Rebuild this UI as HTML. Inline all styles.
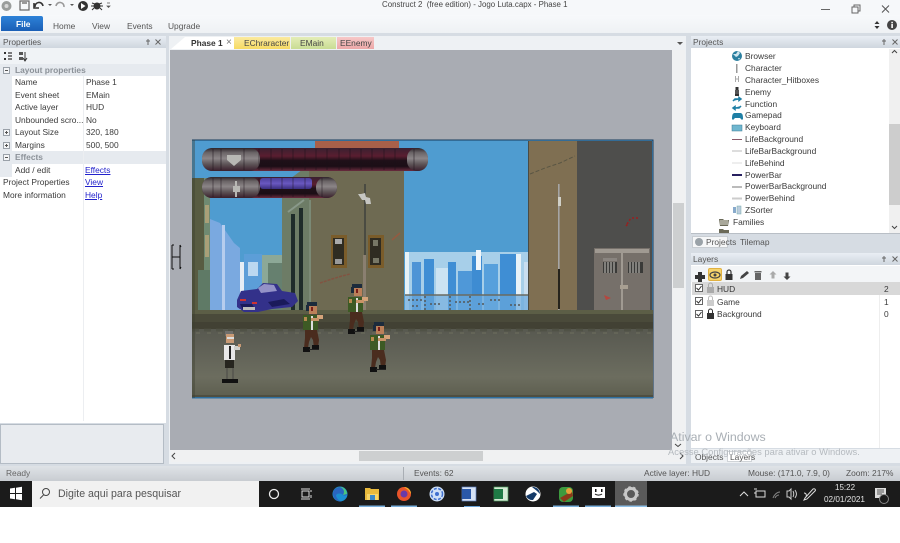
<!DOCTYPE html>
<html><head><meta charset="utf-8"><title>Construct 2</title>
<style>
html,body{margin:0;padding:0;background:#fff;width:900px;height:543px;overflow:hidden}
#a{position:relative;width:900px;height:543px;overflow:hidden;font-family:"Liberation Sans",sans-serif;font-size:8.4px;color:#3a3a3a;filter:blur(.3px)}
.b{position:absolute}
.t{position:absolute;white-space:nowrap;line-height:12px}
.l{color:#2222cc;text-decoration:underline}
.g{color:#8b9198;font-weight:bold}
.h{position:absolute;height:12px;background:linear-gradient(#e9eef4,#cfd6de)}
.w{color:#e4e4e4}
svg{position:absolute;left:0;top:0}
</style></head><body><div id="a">
<div class="b" style="left:0;top:0;width:900px;height:15px;background:#f6f8fa"></div>
<div class="b" style="left:0;top:15px;width:900px;height:18px;background:linear-gradient(#f7f9fb,#eef1f4)"></div>
<div class="b" style="left:0;top:33px;width:900px;height:433px;background:#d6dce3"></div>
<div class="b" style="left:1px;top:16px;width:42px;height:15px;background:linear-gradient(#2d82d8,#1a5fb6);border-radius:2px 2px 0 0"></div>
<div class="t" style="left:16px;top:18px;color:#fff;font-weight:bold">File</div>
<div class="t" style="left:382px;top:-1px;color:#444;font-size:7.9px">Construct 2&nbsp; (free edition) - Jogo Luta.capx - Phase 1</div>
<div class="t" style="left:53px;top:20px;color:#555">Home</div>
<div class="t" style="left:92px;top:20px;color:#555">View</div>
<div class="t" style="left:127px;top:20px;color:#555">Events</div>
<div class="t" style="left:168px;top:20px;color:#555">Upgrade</div>

<!-- properties -->
<div class="b" style="left:0;top:48px;width:166px;height:375px;background:#fff"></div>
<div class="b" style="left:0;top:48px;width:166px;height:16px;background:#f0f3f6"></div>
<div class="h" style="left:0;top:36px;width:166px"></div>
<div class="t" style="left:3px;top:36px;color:#555">Properties</div>
<div class="b" style="left:0;top:64px;width:166px;height:12px;background:#e6eaef"></div>
<div class="b" style="left:0;top:76px;width:12px;height:101px;background:#e6eaef"></div>
<div class="b" style="left:0;top:151px;width:166px;height:13px;background:#e6eaef"></div>
<div class="b" style="left:83px;top:76px;width:1px;height:345px;background:#eceef1"></div>
<div class="t g" style="left:15px;top:64px">Layout properties</div>
<div class="t" style="left:15px;top:76px">Name</div><div class="t" style="left:86px;top:76px">Phase 1</div>
<div class="t" style="left:15px;top:89px">Event sheet</div><div class="t" style="left:86px;top:89px">EMain</div>
<div class="t" style="left:15px;top:101px">Active layer</div><div class="t" style="left:86px;top:101px">HUD</div>
<div class="t" style="left:15px;top:114px">Unbounded scro...</div><div class="t" style="left:86px;top:114px">No</div>
<div class="t" style="left:15px;top:126px">Layout Size</div><div class="t" style="left:86px;top:126px">320, 180</div>
<div class="t" style="left:15px;top:139px">Margins</div><div class="t" style="left:86px;top:139px">500, 500</div>
<div class="t g" style="left:15px;top:151px">Effects</div>
<div class="t" style="left:15px;top:164px">Add / edit</div><div class="t l" style="left:85px;top:164px">Effects</div>
<div class="t" style="left:3px;top:176px">Project Properties</div><div class="t l" style="left:85px;top:176px">View</div>
<div class="t" style="left:3px;top:189px">More information</div><div class="t l" style="left:85px;top:189px">Help</div>
<div class="b" style="left:0;top:424px;width:164px;height:40px;background:#e8ebef;border:1px solid #b4bcc5;box-sizing:border-box"></div>

<!-- editor -->
<div class="b" style="left:169px;top:36px;width:517px;height:428px;background:#eef1f4"></div>
<div class="b" style="left:170px;top:50px;width:502px;height:400px;background:#a9acb3"></div>
<div class="b" style="left:672px;top:50px;width:13px;height:400px;background:#f0f1f2"></div>
<div class="b" style="left:673px;top:203px;width:11px;height:85px;background:#cdcfd0"></div>
<div class="b" style="left:171px;top:450px;width:514px;height:12px;background:#f0f1f2"></div>
<div class="b" style="left:359px;top:451px;width:124px;height:10px;background:#cdcfd0"></div>
<div class="b" style="left:234px;top:37px;width:56px;height:12px;background:linear-gradient(#fbeaa0,#f6da62)"></div>
<div class="b" style="left:291px;top:37px;width:45px;height:12px;background:linear-gradient(#e4edb8,#c9dc94)"></div>
<div class="b" style="left:337px;top:37px;width:37px;height:12px;background:linear-gradient(#f6c8c8,#eca8a8)"></div>
<div class="t" style="left:191px;top:36.5px;font-weight:bold;color:#333">Phase 1</div>
<div class="t" style="left:226px;top:36.5px;color:#777;font-size:10px">×</div>
<div class="t" style="left:244px;top:36.5px;color:#444">EChraracter</div>
<div class="t" style="left:300px;top:36.5px;color:#444">EMain</div>
<div class="t" style="left:340px;top:36.5px;color:#444">EEnemy</div>

<!-- projects -->
<div class="b" style="left:691px;top:36px;width:209px;height:197px;background:#fff"></div>
<div class="h" style="left:691px;top:36px;width:209px"></div>
<div class="t" style="left:693px;top:36px;color:#555">Projects</div>
<div class="b" style="left:889px;top:49px;width:11px;height:184px;background:#f0f0f0"></div>
<div class="b" style="left:889px;top:124px;width:11px;height:81px;background:#cdcdcd"></div>
<div class="t" style="left:745px;top:50px">Browser</div>
<div class="t" style="left:745px;top:62px">Character</div>
<div class="t" style="left:745px;top:74px">Character_Hitboxes</div>
<div class="t" style="left:745px;top:86px">Enemy</div>
<div class="t" style="left:745px;top:98px">Function</div>
<div class="t" style="left:745px;top:109px">Gamepad</div>
<div class="t" style="left:745px;top:121px">Keyboard</div>
<div class="t" style="left:745px;top:133px">LifeBackground</div>
<div class="t" style="left:745px;top:145px">LifeBarBackground</div>
<div class="t" style="left:745px;top:157px">LifeBehind</div>
<div class="t" style="left:745px;top:169px">PowerBar</div>
<div class="t" style="left:745px;top:180px">PowerBarBackground</div>
<div class="t" style="left:745px;top:192px">PowerBehind</div>
<div class="t" style="left:745px;top:204px">ZSorter</div>
<div class="t" style="left:733px;top:216px">Families</div>
<div class="b" style="left:691px;top:233px;width:209px;height:1px;background:#b9bfc6"></div>
<div class="b" style="left:692px;top:236px;width:36px;height:12px;background:#f6f7f8;border:1px solid #c8cdd2;box-sizing:border-box"></div>
<div class="t" style="left:706px;top:236px;color:#555">Projects</div>
<div class="t" style="left:740px;top:236px;color:#555">Tilemap</div>

<!-- layers -->
<div class="b" style="left:691px;top:264px;width:209px;height:184px;background:#fff"></div>
<div class="h" style="left:691px;top:253px;width:209px"></div>
<div class="t" style="left:693px;top:253px;color:#555">Layers</div>
<div class="b" style="left:691px;top:266px;width:209px;height:16px;background:#f3f5f7"></div>
<div class="b" style="left:708px;top:268px;width:14px;height:13px;background:#f5d36b;border:1px solid #e0b040;box-sizing:border-box;border-radius:2px"></div>
<div class="b" style="left:692px;top:282px;width:208px;height:13px;background:#d8d8d8"></div>
<div class="b" style="left:879px;top:295px;width:1px;height:153px;background:#eee"></div>
<div class="t" style="left:717px;top:283px;color:#333">HUD</div>
<div class="t" style="left:717px;top:295.5px">Game</div>
<div class="t" style="left:717px;top:308px">Background</div>
<div class="t" style="left:884px;top:283px">2</div>
<div class="t" style="left:884px;top:295.5px">1</div>
<div class="t" style="left:884px;top:308px">0</div>
<div class="b" style="left:691px;top:449px;width:209px;height:14px;background:#eef1f4"></div>
<div class="b" style="left:727px;top:451px;width:25px;height:11px;background:#fff;border:1px solid #d0d4d8;box-sizing:border-box"></div>
<div class="t" style="left:695px;top:451px;color:#555">Objects</div>
<div class="t" style="left:730px;top:451px;color:#555">Layers</div>

<!-- status -->
<div class="b" style="left:0;top:466px;width:900px;height:15px;background:linear-gradient(#dfe3e7,#c8ccd1)"></div>
<div class="b" style="left:403px;top:467px;width:1px;height:13px;background:#a9aeb4"></div>
<div class="t" style="left:6px;top:467px;color:#666">Ready</div>
<div class="t" style="left:414px;top:467px;color:#555">Events: 62</div>
<div class="t" style="left:644px;top:467px;color:#555">Active layer: HUD</div>
<div class="t" style="left:748px;top:467px;color:#555">Mouse: (171.0, 7.9, 0)</div>
<div class="t" style="left:846px;top:467px;color:#555">Zoom: 217%</div>

<!-- taskbar -->
<div class="b" style="left:0;top:481px;width:900px;height:26px;background:#1b1b1b"></div>
<div class="b" style="left:32px;top:481px;width:227px;height:26px;background:#f1f1f1"></div>
<div class="b" style="left:615px;top:481px;width:32px;height:26px;background:#5a5a5a"></div>
<div class="t" style="left:58px;top:488px;font-size:10.6px;color:#555">Digite aqui para pesquisar</div>
<div class="t w" style="left:835px;top:482px;font-size:8px">15:22</div>
<div class="t w" style="left:824px;top:494px;font-size:8.2px">02/01/2021</div>

<svg width="900" height="543" viewBox="0 0 900 543" xmlns="http://www.w3.org/2000/svg">
<defs>
<linearGradient id="road" x1="0" y1="0" x2="0" y2="1"><stop offset="0" stop-color="#585950"/><stop offset=".25" stop-color="#5f6056"/><stop offset=".7" stop-color="#6c6d5f"/><stop offset="1" stop-color="#5d5e4f"/></linearGradient>
<linearGradient id="bar" x1="0" y1="0" x2="0" y2="1"><stop offset="0" stop-color="#3a2030"/><stop offset=".35" stop-color="#5a1e30"/><stop offset=".55" stop-color="#1e1018"/><stop offset=".8" stop-color="#1c0e16"/><stop offset="1" stop-color="#6b2b3e"/></linearGradient>
<linearGradient id="cap" x1="0" y1="0" x2="0" y2="1"><stop offset="0" stop-color="#2d242a"/><stop offset=".2" stop-color="#6a6466"/><stop offset=".45" stop-color="#8b8587"/><stop offset=".7" stop-color="#5e5558"/><stop offset="1" stop-color="#3a1f2c"/></linearGradient>
<linearGradient id="pow" x1="0" y1="0" x2="0" y2="1"><stop offset="0" stop-color="#4b3f9a"/><stop offset=".5" stop-color="#6a58c0"/><stop offset="1" stop-color="#3a2f80"/></linearGradient>
<g id="en">
<rect x="4" y="0" width="10" height="6" fill="#1c2b3c"/><rect x="3" y="3" width="3" height="6" fill="#1c2b3c"/>
<rect x="6" y="4" width="8" height="8" fill="#bb8059"/><rect x="8" y="5" width="2" height="4" fill="#7a1e1a"/>
<rect x="0" y="13" width="15" height="15" fill="#3d5a24"/><rect x="8" y="14" width="2" height="15" fill="#ddd"/>
<rect x="1" y="15" width="3" height="4" fill="#b78a50"/><rect x="14" y="13" width="6" height="4" fill="#d5a47a"/><rect x="8" y="16" width="8" height="3" fill="#c89468"/>
<path d="M2 28h12l2 10 -1 8h-4l-1-8 -2-3 -2 5 -1 6h-4l1-10z" fill="#4a2c1e"/>
<rect x="0" y="45" width="7" height="5" fill="#111"/><rect x="9" y="43" width="7" height="4" fill="#111"/>
<rect x="6" y="47" width="10" height="1" fill="#222"/>
</g>
</defs>

<!-- scene -->
<rect x="192" y="140" width="461" height="258" fill="#4f9cd0"/>
<path d="M192 140h461v258" fill="none" stroke="#173c5e"/>
<rect x="315" y="141" width="84" height="7" fill="#a9604a"/>
<!-- left skyline -->
<path d="M210 219l10 4 14 20 6 5v62h-30z" fill="#7aa9e0"/>
<rect x="222" y="225" width="3" height="85" fill="#b6cdee"/>
<rect x="240" y="262" width="4" height="48" fill="#e6eef5"/>
<rect x="244" y="254" width="18" height="56" fill="#5c9ed8"/>
<rect x="248" y="262" width="10" height="14" fill="#bcd8f0"/>
<rect x="262" y="255" width="20" height="55" fill="#8ca897"/>
<rect x="268" y="263" width="14" height="47" fill="#66806f"/>
<!-- left building -->
<rect x="192" y="178" width="12" height="132" fill="#585c42"/>
<rect x="204" y="178" width="6" height="132" fill="#6f8a72"/>
<rect x="205" y="205" width="4" height="18" fill="#a9a078"/>
<rect x="205" y="235" width="4" height="22" fill="#a9a078"/>
<rect x="198" y="270" width="12" height="40" fill="#5f7a66"/>
<!-- center building -->
<path d="M282 185l20-15 5-2h97v142H282z" fill="#6e6a52"/>
<path d="M282 185l20-15h7v140h-27z" fill="#6d7c66"/>
<path d="M288 212l16-12" stroke="#89998a" stroke-width="2"/>
<rect x="291" y="214" width="4" height="96" fill="#1f2c2a"/>
<rect x="299" y="208" width="4" height="102" fill="#1f2c2a"/>
<rect x="309" y="200" width="2" height="110" fill="#7b8a76"/>
<rect x="331" y="235" width="16" height="33" fill="#7a5c2a"/><rect x="333" y="238" width="11" height="27" fill="#2f2c22"/><rect x="335" y="239" width="7" height="5" fill="#aaa"/><rect x="335" y="259" width="7" height="5" fill="#999"/>
<rect x="368" y="235" width="16" height="33" fill="#7a5c2a"/><rect x="370" y="238" width="11" height="27" fill="#2f2c22"/><rect x="373" y="240" width="5" height="6" fill="#776"/><rect x="373" y="258" width="6" height="5" fill="#776"/>
<rect x="364" y="184" width="2" height="126" fill="#4a4b42"/><rect x="363" y="255" width="3" height="55" fill="#8a7f70"/>
<path d="M358 194l4 6h3l1 4h5l-1-6-4-1-1-4-4 1z" fill="#c6c6c2"/>
<path d="M320 283l12-4 10-3 8-2" stroke="#8a4a3a" stroke-width="1.500" fill="none" stroke-dasharray="3 1" opacity=".7"/>
<path d="M392 240l8-7" stroke="#a3553a" stroke-width="1.600" opacity=".7"/>
<!-- right skyline -->
<rect x="405" y="252" width="123" height="58" fill="#a7cfe9"/>
<rect x="405" y="252" width="4" height="58" fill="#e6f2f8"/>
<rect x="412" y="262" width="9" height="48" fill="#4d94d6"/>
<rect x="424" y="259" width="10" height="51" fill="#3f8ed4"/>
<rect x="436" y="268" width="20" height="42" fill="#cbe3f2"/>
<rect x="448" y="262" width="8" height="48" fill="#3f8ed4"/>
<rect x="458" y="271" width="16" height="39" fill="#4f98d8"/>
<rect x="472" y="256" width="10" height="54" fill="#3e8cd2"/>
<rect x="476" y="250" width="5" height="20" fill="#f0f6fa"/>
<rect x="484" y="264" width="14" height="46" fill="#57a0dc"/>
<rect x="500" y="254" width="16" height="56" fill="#3f8ed4"/>
<rect x="516" y="254" width="5" height="56" fill="#e8f2f8"/>
<rect x="524" y="262" width="4" height="48" fill="#c9def0"/>
<rect x="405" y="295" width="123" height="15" fill="#6aa8dc" opacity=".7"/>
<path d="M405 295h123" stroke="#6a6a60" stroke-width="1.500"/>
<path d="M408 300h15M425 296v14M450 296v14M470 296v14M430 304h12M455 302h16M490 300h12M510 305h12M412 306h8M478 304h6" stroke="#555c60" stroke-width="2" stroke-dasharray="2 2" fill="none" opacity=".8"/>
<!-- right side -->
<rect x="529" y="141" width="48" height="169" fill="#7f6f52"/>
<rect x="528" y="141" width="1" height="169" fill="#4b4b44"/>
<rect x="577" y="141" width="75" height="169" fill="#4e4e4c"/>
<path d="M530 174l15-6 15-5 15-7" stroke="#5a5644" stroke-width="1" stroke-dasharray="4 2" fill="none"/>
<rect x="558" y="184" width="1.600" height="126" fill="#a5a5a5"/><rect x="558" y="197" width="3" height="9" fill="#d0d0c8"/><rect x="558" y="269" width="2" height="40" fill="#26231c"/>
<path d="M627 224l4-6M632 218h6M626 226l3-3" stroke="#9a1e1e" stroke-width="1.500" stroke-dasharray="2 2" fill="none"/>
<rect x="594" y="248" width="56" height="62" fill="#76706a"/>
<rect x="595" y="249" width="54" height="4" fill="#a09a92"/>
<rect x="621" y="249" width="2" height="61" fill="#a09a92"/>
<rect x="603" y="262" width="14" height="11" fill="#3a3a38"/><rect x="628" y="262" width="15" height="11" fill="#3a3a38"/>
<path d="M605 262v11M608 262v11M611 262v11M614 262v11M630 262v11M633 262v11M636 262v11M639 262v11" stroke="#c8c6c0"/>
<rect x="603" y="258" width="14" height="3" fill="#8a8580"/>
<path d="M604 295l7 3-5 2z" fill="#b5473f"/>
<rect x="620" y="285" width="8" height="4" fill="#a89f92"/>
<!-- ground -->
<rect x="192" y="310" width="461" height="4" fill="#5c5e46"/>
<rect x="192" y="314" width="461" height="11" fill="#4a4a3a"/>
<rect x="192" y="322" width="461" height="7" fill="#424134"/>
<rect x="192" y="329" width="461" height="68" fill="url(#road)"/>
<path d="M192 330h461" stroke="#4e4f42" stroke-width="3" stroke-dasharray="7 5" opacity=".7"/>
<path d="M196 333h457" stroke="#6e6f5e" stroke-width="2" stroke-dasharray="4 7" opacity=".5"/>
<path d="M192 396h461" stroke="#4a4a3c" stroke-width="1.500"/>
<rect x="192" y="397" width="461" height="1.500" fill="#2f6f9f"/>
<rect x="192" y="140" width="3" height="258" fill="#3d3e30" opacity=".4"/>
<!-- car -->
<path d="M237 300l4-9 16-2 6-6 14 1 5 7 13 2 3 8-6 6-20 2-14 3h-14l-7-5z" fill="#33318a"/>
<path d="M258 288l6-4 10 1 3 6-16 2z" fill="#9492c8"/>
<path d="M240 304h12l3 5-12 1zM268 302l16-3 6 5-18 3z" fill="#1a1a5a"/>
<rect x="240" y="299" width="6" height="2" fill="#c33"/><rect x="252" y="302" width="5" height="2" fill="#c33"/>
<rect x="243" y="307" width="12" height="3" fill="#bbb"/>
<!-- bars -->
<rect x="202" y="148" width="226" height="23" rx="11" fill="url(#bar)"/>
<rect x="202" y="148" width="58" height="23" rx="10" fill="url(#cap)"/>
<rect x="407" y="148" width="21" height="23" rx="10" fill="url(#cap)"/>
<path d="M213 149v21M221 149v21M244 149v21M259 149v21M271 149v21M282 149v21M293 149v21M305 149v21M316 149v21M327 149v21M339 149v21M350 149v21M361 149v21M372 149v21M384 149v21M395 149v21M414 149v21" stroke="#1a1018" stroke-opacity=".5"/>
<path d="M227 155h14v5l-7 6-7-6z" fill="#b8b8b4"/>
<rect x="202" y="177" width="135" height="21" rx="10" fill="url(#bar)"/>
<rect x="202" y="177" width="58" height="21" rx="10" fill="url(#cap)"/>
<rect x="260" y="178" width="52" height="11" rx="3" fill="url(#pow)"/>
<rect x="316" y="177" width="21" height="21" rx="10" fill="url(#cap)"/>
<path d="M213 178v19M221 178v19M244 178v19M259 178v19M271 178v19M282 178v19M293 178v19M305 178v19M322 178v19" stroke="#1a1018" stroke-opacity=".45"/>
<path d="M233 186h2v-5h2v5h3v6h-3v5h-2v-5h-2z" fill="#b8b8b4"/>
<!-- characters -->
<use href="#en" x="303" y="302"/>
<use href="#en" x="348" y="284"/>
<use href="#en" x="370" y="322"/>
<rect x="225" y="331" width="8" height="5" fill="#6f6f6c"/><rect x="226" y="334" width="8" height="9" fill="#c99a75"/><rect x="227" y="337" width="7" height="2" fill="#ddd"/>
<rect x="224" y="345" width="11" height="15" fill="#e8e8e8"/><rect x="229" y="346" width="2" height="13" fill="#222"/><rect x="234" y="346" width="6" height="4" fill="#cfcfca"/><rect x="238" y="344" width="3" height="3" fill="#c99a75"/>
<rect x="225" y="360" width="9" height="8" fill="#26251f"/><rect x="226" y="368" width="2" height="13" fill="#5a5a52"/><rect x="232" y="368" width="2" height="13" fill="#5a5a52"/>
<rect x="222" y="379" width="16" height="4" fill="#111"/>
<!-- H object -->
<path d="M172 245v24M180 245v24M172 257h8M172 245h2M172 269h2M180 269l1-2M180 245l1 2" stroke="#111" stroke-width="1" fill="none"/>
<!-- phase tab -->
<path d="M171 49l14-12h49v12z" fill="#fff"/>

<!-- qat -->
<circle cx="6.500" cy="6" r="5" fill="#9a9d9c"/><circle cx="6.500" cy="6" r="2" fill="#d8d8d8"/>
<rect x="20" y="1" width="9" height="9" fill="none" stroke="#666" stroke-width="1.200"/><rect x="22" y="1" width="5" height="3" fill="#999"/>
<path d="M35 7a4 4 0 0 1 8-1M34 3v5h5" stroke="#333" stroke-width="1.600" fill="none"/>
<path d="M48 4l2 2 2-2z" fill="#555"/>
<path d="M64 7a4 4 0 0 0-8-1" stroke="#999" stroke-width="1.600" fill="none"/>
<path d="M70 4l2 2 2-2z" fill="#555"/>
<circle cx="83" cy="6" r="5" fill="#333"/><path d="M81 3l4.500 3-4.500 3z" fill="#fff"/>
<circle cx="97" cy="6" r="3.500" fill="#333"/><path d="M92 3l3 1M102 3l-3 1M91 6h3M100 6h3M92 10l2-2M102 10l-2-2" stroke="#333"/>
<path d="M107 3h3M107 6l1.500 1.500L110 6z" stroke="#555" fill="#555" stroke-width=".7"/>
<!-- window controls -->
<path d="M821 9.500h9" stroke="#666"/>
<rect x="852" y="7" width="6" height="6" fill="none" stroke="#666"/><path d="M854 7V5h6v6h-2" stroke="#666" fill="none"/>
<path d="M882 5.500l7 7M889 5.500l-7 7" stroke="#555"/>
<path d="M877 21l-2.500 3h5zM877 29l-2.500-3h5z" fill="#333"/>
<circle cx="892" cy="25" r="5" fill="#444"/><rect x="891.300" y="24" width="1.600" height="4" fill="#fff"/><rect x="891.300" y="21.800" width="1.600" height="1.500" fill="#fff"/>
<!-- panel buttons -->
<path d="M146 41h4M148 39v4M148 43v2" stroke="#666"/><path d="M155.500 39.500l5 5M160.500 39.500l-5 5" stroke="#666"/>
<path d="M882 41h4M884 39v4M884 43v2" stroke="#666"/><path d="M892.500 39.500l5 5M897.500 39.500l-5 5" stroke="#666"/>
<path d="M882 258h4M884 256v4M884 260v2" stroke="#666"/><path d="M892.500 256.500l5 5M897.500 256.500l-5 5" stroke="#666"/>
<path d="M677 42l3 3 3-3z" fill="#555"/>
<path d="M175 453l-3 3 3 3M680 453l3 3-3 3M675 444l3 2.500 3-2.500M892 53l2.500-2.500 2.500 2.500M892 226l2.500 2.500 2.500-2.500" stroke="#444" fill="none"/>
<!-- prop toolbar -->
<path d="M8 53h4M8 56h4M8 59h4" stroke="#333" stroke-width="1.200"/><rect x="4" y="52" width="2" height="2" fill="#333"/><rect x="4" y="58" width="2" height="2" fill="#333"/>
<path d="M25 52v8M23 58l2 3 2-3" stroke="#333" fill="none"/><rect x="19" y="52" width="4" height="3" fill="#555"/><rect x="19" y="57" width="4" height="3" fill="#555"/>
<g fill="#f4f5f7" stroke="#9aa1a9"><rect x="3.500" y="67.500" width="6" height="6"/><rect x="3.500" y="129.500" width="6" height="6"/><rect x="3.500" y="142.500" width="6" height="6"/><rect x="3.500" y="154.500" width="6" height="6"/></g>
<path d="M5 70.500h3M5 132.500h3M6.500 131v3M5 145.500h3M6.500 144v3M5 157.500h3" stroke="#555"/>
<!-- project icons -->
<circle cx="737" cy="56" r="5" fill="#2a7fa0"/><path d="M733 54l3 0 2-3 2 2-2 3-2 1zM738 58l2 0-1 2z" fill="#cfe5ee"/>
<rect x="736" y="64" width="1.500" height="9" fill="#999"/>
<path d="M735.500 76v6M738.500 76v6M735.500 79h3" stroke="#aaa"/>
<rect x="735.500" y="87" width="3" height="3" fill="#333"/><rect x="735" y="90" width="4" height="4" fill="#555"/><rect x="735" y="94" width="4" height="2" fill="#333"/>
<path d="M733 101l2-2h6M741 99l-2-1.500v3zM741 106l-2 2h-6M733 108l2-1.500v3z" stroke="#1f7fa5" stroke-width="1.500" fill="#1f7fa5"/>
<path d="M732 119c0-5 1-6 3-6h5c2 0 3 1 3 6l-1 1-2-2h-5l-2 2z" fill="#1f7fa5"/>
<rect x="732" y="125" width="10" height="6" fill="#6fb6cf" stroke="#3a7a94" stroke-width=".5"/>
<path d="M732 139.500h10" stroke="#8a5a6a"/><path d="M732 151h10" stroke="#bbb"/><path d="M732 163h10" stroke="#ddd"/>
<path d="M732 175h10" stroke="#272060" stroke-width="2"/><path d="M732 187h10" stroke="#777"/><path d="M732 198.500h10" stroke="#ccc" stroke-width="2"/>
<rect x="733" y="207" width="3" height="6" fill="#8ac" /><rect x="737" y="206" width="4" height="8" fill="#bcd" stroke="#7aa" stroke-width=".5"/>
<path d="M719 219h4l1 1h5l-1 6h-8z" fill="#6b6a58"/><rect x="720" y="220" width="8" height="5" fill="#a9a89a"/>
<path d="M719 229h4l1 1h5v3h-10z" fill="#6b6a58"/>
<circle cx="699" cy="242" r="4" fill="#9aa2a8"/>
<!-- layers toolbar -->
<path d="M698 273h4v3h3v4h-3v3h-4v-3h-3v-4h3z" fill="#333" transform="translate(0,-1)"/>
<ellipse cx="715" cy="275" rx="5" ry="3" fill="none" stroke="#444" stroke-width="1.200"/><circle cx="715" cy="275" r="1.500" fill="#444"/>
<rect x="725.500" y="274" width="7" height="6" fill="#333"/><path d="M727 274v-2a2 2 0 0 1 4 0v2" stroke="#333" fill="none" stroke-width="1.200"/>
<path d="M740 279l1-3 6-5 2 2-6 5z" fill="#444"/>
<rect x="755" y="273" width="6" height="7" fill="#666"/><rect x="754.500" y="271" width="7" height="1.500" fill="#666"/>
<path d="M773 271l-3.500 3.500h2v4h3v-4h2z" fill="#aaa"/><path d="M787 280l-3.500-3.500h2v-4h3v4h2z" fill="#444"/>
<g fill="#fff" stroke="#666"><rect x="695.500" y="284.500" width="7" height="7"/><rect x="695.500" y="297.500" width="7" height="7"/><rect x="695.500" y="310.500" width="7" height="7"/></g>
<path d="M696.500 288l2 2 3-4M696.500 301l2 2 3-4M696.500 314l2 2 3-4" stroke="#333" fill="none"/>
<rect x="707" y="287" width="7" height="6" fill="#aaa"/><path d="M708.500 287v-2a2 2 0 0 1 4 0v2" stroke="#aaa" fill="none"/>
<rect x="707" y="300" width="7" height="6" fill="#ccc"/><path d="M708.500 300v-2a2 2 0 0 1 4 0v2" stroke="#bbb" fill="none"/>
<rect x="707" y="313" width="7" height="6" fill="#333"/><path d="M708.500 313v-2a2 2 0 0 1 4 0v2" stroke="#333" fill="none"/>
<!-- taskbar icons -->
<path d="M10 488.500l5-.7v5.200h-5zM16 487.700l6-.9v6.200h-6zM10 494h5v5.200l-5-.7zM16 494h6v6.200l-6-.9z" fill="#fff"/>
<circle cx="46" cy="492" r="3.500" fill="none" stroke="#444"/><path d="M43.500 495l-3.500 3.500" stroke="#444"/>
<circle cx="274" cy="494" r="4.500" fill="none" stroke="#eee" stroke-width="1.300"/>
<rect x="302" y="491" width="7" height="6" fill="none" stroke="#ddd"/><path d="M301 489h9M301 499h9M311 490v2M311 495v3" stroke="#ddd"/>
<circle cx="340" cy="494" r="7.500" fill="#1b8fd0"/><path d="M333 494a7 7 0 0 1 14 0c0 2-3 2-4 1a4 3 0 0 0-7 0c0 3 3 6 6 6.500a8 8 0 0 1-9-7.500z" fill="#2a66c0"/><path d="M335 489a7 7 0 0 1 12 5l-4 1a4 4 0 0 0-8-6z" fill="#49c77e"/>
<path d="M365 488h5l1 1h8v11h-14z" fill="#e8b93c"/><rect x="367" y="494" width="11" height="6" fill="#f7d569"/><rect x="370" y="495" width="5" height="5" fill="#3a88c9"/>
<circle cx="404" cy="494" r="7" fill="#e8542a"/><path d="M404 487a7 7 0 0 1 7 7l-3-4z" fill="#f6ac2a"/><circle cx="404" cy="494" r="3.500" fill="#6a3aa8"/>
<circle cx="437" cy="494" r="7.500" fill="#cfe0f7"/><circle cx="437" cy="494" r="5.500" fill="none" stroke="#3f6fd0" stroke-width="1.500" stroke-dasharray="3 1.500"/><circle cx="437" cy="494" r="2" fill="#3f6fd0"/>
<rect x="462" y="487" width="14" height="14" fill="#d6e2f5" stroke="#5d7fbf" stroke-width=".7"/><rect x="462" y="489" width="9" height="10" fill="#2a58a8"/>
<rect x="494" y="487" width="14" height="14" fill="#d6ebd6" stroke="#4d9a5d" stroke-width=".7"/><rect x="494" y="489" width="9" height="10" fill="#1f7a45"/>
<circle cx="533" cy="494" r="7.500" fill="#fff"/><path d="M526 496l8-4 3 2-4 6a7 7 0 0 1-7-4zM532 487a7 7 0 0 1 8 7l-3-3z" fill="#143a68"/>
<rect x="559" y="487" width="14" height="15" rx="4" fill="#3d9a3e"/><path d="M560 498l12-7 1 5-9 6z" fill="#8a3a1a"/><circle cx="569" cy="491" r="3" fill="#e6a13a"/>
<rect x="592" y="487" width="13" height="11" fill="#fff"/><rect x="595" y="489" width="1.500" height="3" fill="#111"/><rect x="601" y="489" width="1.500" height="3" fill="#111"/><path d="M595 494c2 1.500 5 1.500 7 0" stroke="#111" fill="none"/>
<circle cx="631" cy="494" r="5.500" fill="none" stroke="#c8c8c8" stroke-width="3" /><circle cx="631" cy="494" r="7" fill="none" stroke="#c8c8c8" stroke-width="1.500" stroke-dasharray="2.500 2.500"/>
<path d="M740 496l4-4 4 4" stroke="#ddd" fill="none"/>
<rect x="756" y="491" width="9" height="6" fill="none" stroke="#ddd"/><path d="M754 489h3M754 493h2" stroke="#ddd"/>
<path d="M773 498c1-3 4-6 7-6M775 498c1-2 2-3 4-3" stroke="#888" fill="none"/>
<path d="M787 491h2l2-2v10l-2-2h-2zM793 491c1 2 1 4 0 6M795 490c2 3 2 5 0 8" stroke="#ccc" fill="none"/>
<path d="M805 498l8-9c2-1 3 1 2 2l-8 8-3 1zM804 493c2 0 3 2 2 4" stroke="#ddd" fill="none"/>
<path d="M875 488h11v8h-5l-2 2h-4z" fill="#ddd"/><circle cx="884" cy="499" r="4.500" fill="#1b1b1b" stroke="#888"/>
<path d="M877 490h7M877 492h7M877 494h5" stroke="#555"/>
<rect x="464" y="506" width="16" height="1" fill="#6aa3d8"/><rect x="359" y="505.500" width="26" height="1.500" fill="#7ab0de"/><rect x="391" y="505.500" width="26" height="1.500" fill="#7ab0de"/><rect x="553" y="505.500" width="26" height="1.500" fill="#7ab0de"/><rect x="585" y="505.500" width="26" height="1.500" fill="#7ab0de"/><rect x="615" y="505.500" width="32" height="1.500" fill="#8ec0e8"/>
</svg>
<div class="t" style="left:191px;top:36.5px;font-weight:bold;color:#333">Phase 1</div>
<div class="t" style="left:226px;top:36.5px;color:#777;font-size:10px">×</div>
<div class="t" style="left:670px;top:431px;font-size:12.4px;color:#a9afb5">Ativar o Windows</div>
<div class="t" style="left:668px;top:446px;font-size:9.4px;color:#b5babf">Acesse Configurações para ativar o Windows.</div>
</div></body></html>
